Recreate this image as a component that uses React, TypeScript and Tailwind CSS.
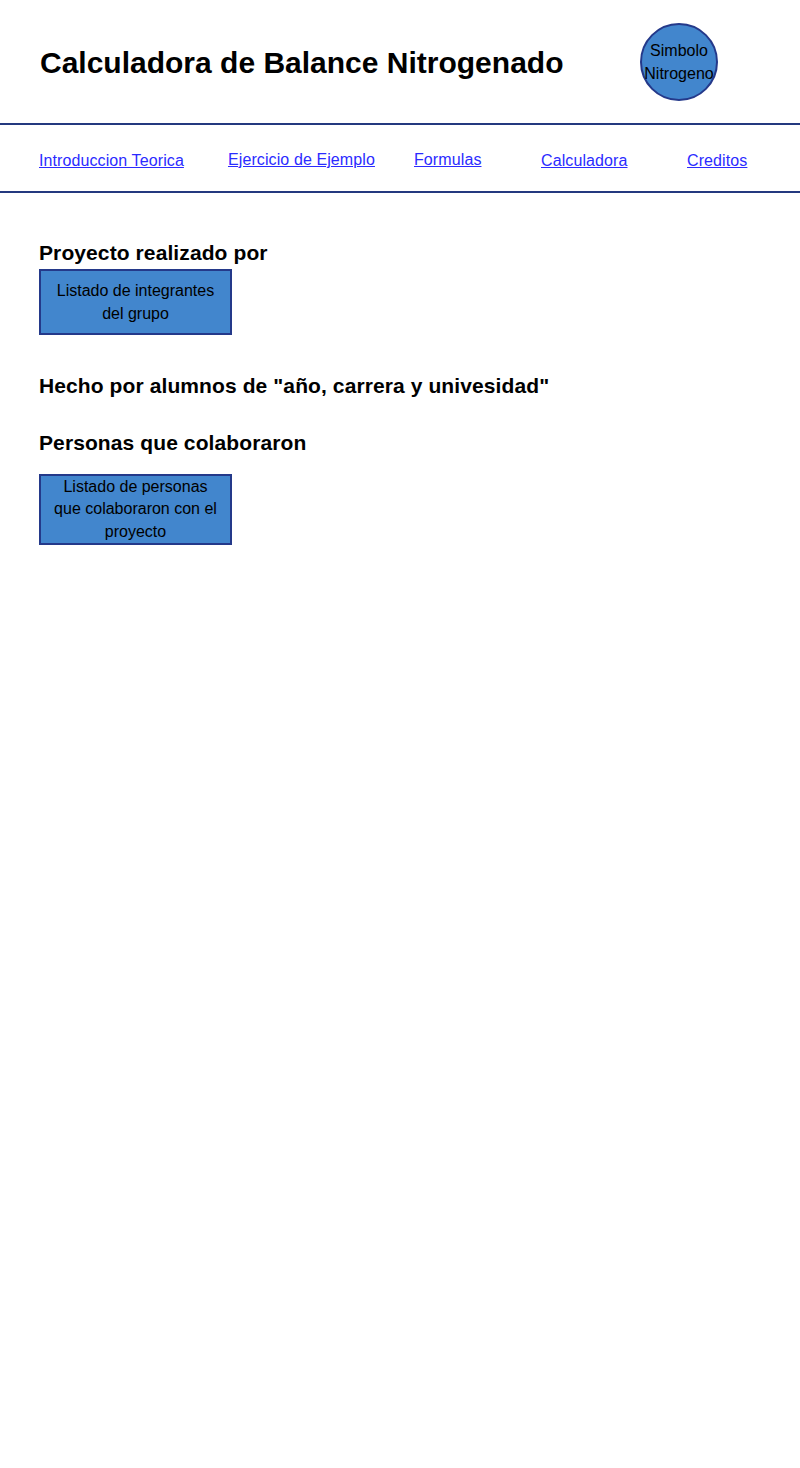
import React from 'react';

const links = [
  { label: 'Introduccion Teorica', className: 'w-[189px]' },
  { label: 'Ejercicio de Ejemplo', className: 'w-[186px] -mt-[2px]' },
  { label: 'Formulas', className: 'w-[127px] -mt-[2px]' },
  { label: 'Calculadora', className: 'w-[146px]' },
  { label: 'Creditos', className: 'w-[80px]' },
];

const InfoBox: React.FC<{ children: React.ReactNode; tall?: boolean }> = ({ children, tall }) => (
  <div
    className={`w-[193px] ${tall ? 'h-[71px] leading-[22.5px]' : 'h-[66px] leading-[23px]'} bg-[#4286cd] border-2 border-[#24398a] flex items-center justify-center text-center text-[16px] text-black px-2`}
  >
    <span>{children}</span>
  </div>
);

const App: React.FC = () => {
  return (
    <div className="min-h-[1468px] bg-white text-black font-['Liberation_Sans',Arial,sans-serif]">
      {/* Header */}
      <header className="h-[123px] flex items-center justify-between pl-10 pr-[82px] pt-[3px]">
        <h1 className="text-[30px] font-bold leading-none">Calculadora de Balance Nitrogenado</h1>
        <div className="w-[78px] h-[78px] rounded-full bg-[#4286cd] border-2 border-[#24398a] flex items-center justify-center text-center text-[16px] leading-[23px] -mt-[2px]">
          Simbolo
          <br />
          Nitrogeno
        </div>
      </header>

      {/* Nav */}
      <nav className="h-[70px] border-y-2 border-[#24397f] flex items-center pl-[39px] pt-[6px]">
        {links.map((link) => (
          <div key={link.label} className={`shrink-0 ${link.className}`}>
            <a href="#" className="text-[16px] text-[#2b2bff] underline tracking-[0.1px]">
              {link.label}
            </a>
          </div>
        ))}
      </nav>

      {/* Content */}
      <main className="pl-[39px] pt-[48px]">
        <h2 className="text-[21px] font-bold leading-[24px] tracking-[0.1px]">Proyecto realizado por</h2>
        <div className="mt-[4px]">
          <InfoBox>Listado de integrantes del grupo</InfoBox>
        </div>

        <h2 className="mt-[39px] text-[21px] font-bold leading-[24px] tracking-[0.1px]">
          Hecho por alumnos de "año, carrera y univesidad"
        </h2>

        <h2 className="mt-[33px] text-[21px] font-bold leading-[24px] tracking-[0.1px]">Personas que colaboraron</h2>
        <div className="mt-[19px]">
          <InfoBox tall>Listado de personas que colaboraron con el proyecto</InfoBox>
        </div>
      </main>
    </div>
  );
};

export default App;
